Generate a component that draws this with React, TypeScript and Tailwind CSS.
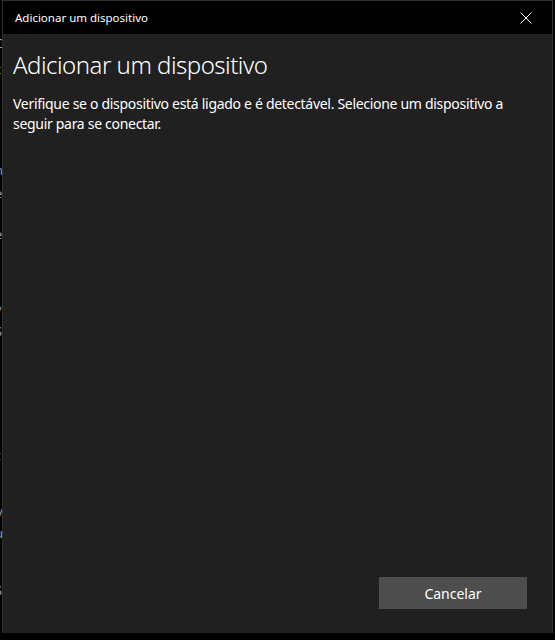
import React from "react";

export default function App() {
  const font = { fontFamily: '"Noto Sans", "Open Sans", sans-serif' };
  return (
    <div className="relative w-[555px] h-[640px] bg-black overflow-hidden" style={font}>
      {/* fragments of the window behind, at the left edge */}
      <div className="absolute left-0 top-0 w-[2px] h-[640px] overflow-hidden text-[#9a9a9a] text-[13px] leading-none">
        <span className="absolute left-[-5px] top-[37px]">C</span>
        <span className="absolute left-[-5px] top-[63px]">c</span>
        <span className="absolute left-[-5px] top-[164px]">n</span>
        <span className="absolute left-[-5px] top-[187px]">e</span>
        <span className="absolute left-[-5px] top-[228px]">e</span>
        <span className="absolute left-[-5px] top-[303px]">v</span>
        <span className="absolute left-[-5px] top-[325px]">S</span>
        <span className="absolute left-[-4px] top-[449px]">t</span>
        <span className="absolute left-[-5px] top-[507px]">V</span>
        <span className="absolute left-[-5px] top-[527px]">u</span>
        <span className="absolute left-[-5px] top-[584px]">S</span>
      </div>
      <div className="ml-[2px] w-[551px] h-[633px] flex flex-col border-t border-l border-r border-[#2f2f2f] bg-[#202020]">
        <div className="h-[33px] shrink-0 bg-black flex items-center justify-between pl-[12px] pr-[15px]">
          <span className="text-[11.5px] text-white">Adicionar um dispositivo</span>
          <svg width="12" height="12" viewBox="0 0 12 12" className="mr-[5px]">
            <path d="M0.5 0.5 L11.5 11.5 M11.5 0.5 L0.5 11.5" stroke="#fff" strokeWidth="1" />
          </svg>
        </div>
        <div className="flex-1 flex flex-col pl-[10px] pr-[25px] pt-[13px] pb-[24px]">
          <h1 className="text-[24px] tracking-[-0.5px] font-light text-white leading-[36px]">Adicionar um dispositivo</h1>
          <p className="mt-[11px] text-[14px] tracking-[-0.3px] text-white leading-[20px] pr-[10px]">
            Verifique se o dispositivo está ligado e é detectável. Selecione um dispositivo a seguir para se conectar.
          </p>
          <div className="flex-1" />
          <div className="flex justify-end">
            <button className="w-[148px] h-[32px] bg-[#4d4d4d] text-white text-[14px]">Cancelar</button>
          </div>
        </div>
      </div>
    </div>
  );
}
